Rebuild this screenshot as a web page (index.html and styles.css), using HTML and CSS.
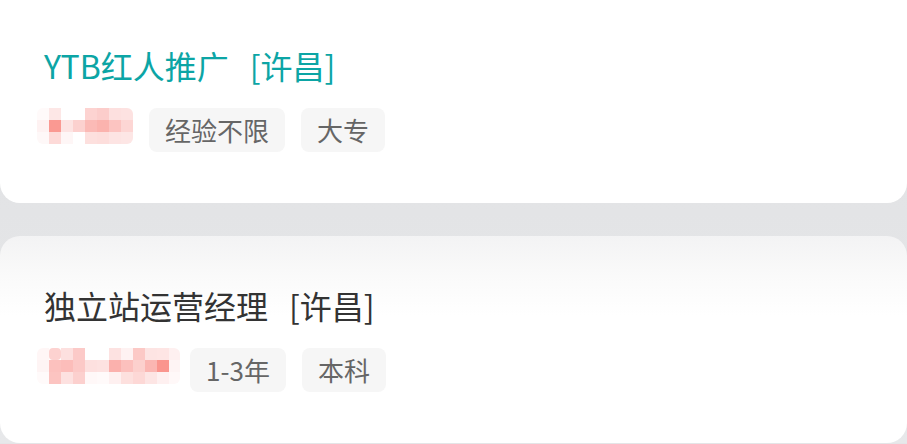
FILE: index.html
```html
<!DOCTYPE html>
<html lang="zh-CN">
<head>
  <meta charset="UTF-8">
  <meta name="viewport" content="width=device-width, initial-scale=1.0">
  <title>职位列表</title>
  <link rel="stylesheet" href="styles.css">
</head>
<body>
  <div class="job-list">
    <div class="job-card">
      <div class="job-title visited">YTB红人推广<span class="job-area">[许昌]</span></div>
      <div class="job-info">
        <!-- 薪资打码 -->
        <svg class="mosaic" width="96" height="36" viewBox="0 0 96 36">
          <rect x="0" y="0" width="12" height="12" fill="#fffafa"/>
          <rect x="12" y="0" width="12" height="12" fill="#fde7e6"/>
          <rect x="24" y="0" width="12" height="12" fill="#ffffff"/>
          <rect x="36" y="0" width="12" height="12" fill="#ffffff"/>
          <rect x="48" y="0" width="12" height="12" fill="#fdd3d1"/>
          <rect x="60" y="0" width="12" height="12" fill="#fccdcb"/>
          <rect x="72" y="0" width="12" height="12" fill="#fde0df"/>
          <rect x="84" y="0" width="12" height="12" fill="#fde2e1"/>
          <rect x="0" y="12" width="12" height="12" fill="#fef2f2"/>
          <rect x="12" y="12" width="12" height="12" fill="#fa9992"/>
          <rect x="24" y="12" width="12" height="12" fill="#fde4e3"/>
          <rect x="36" y="12" width="12" height="12" fill="#fcd1cf"/>
          <rect x="48" y="12" width="12" height="12" fill="#fbbab6"/>
          <rect x="60" y="12" width="12" height="12" fill="#fbb3ae"/>
          <rect x="72" y="12" width="12" height="12" fill="#fcc4c1"/>
          <rect x="84" y="12" width="12" height="12" fill="#fdd6d4"/>
          <rect x="0" y="24" width="12" height="12" fill="#fef8f8"/>
          <rect x="12" y="24" width="12" height="12" fill="#fddad8"/>
          <rect x="24" y="24" width="12" height="12" fill="#fef6f6"/>
          <rect x="36" y="24" width="12" height="12" fill="#ffffff"/>
          <rect x="48" y="24" width="12" height="12" fill="#fde0de"/>
          <rect x="60" y="24" width="12" height="12" fill="#fddedc"/>
          <rect x="72" y="24" width="12" height="12" fill="#fde4e3"/>
          <rect x="84" y="24" width="12" height="12" fill="#fde6e5"/>
        </svg>
        <span class="tag">经验不限</span>
        <span class="tag">大专</span>
      </div>
    </div>

    <div class="job-card hover">
      <div class="job-title">独立站运营经理<span class="job-area">[许昌]</span></div>
      <div class="job-info">
        <svg class="mosaic wide" width="143" height="36" viewBox="0 0 143 36">
          <rect x="0" y="0" width="12" height="12" fill="#fff6f6"/>
          <rect x="12" y="0" width="12" height="12" fill="#fdd2d0" rx="4"/>
          <rect x="24" y="0" width="12" height="12" fill="#fde0df"/>
          <rect x="36" y="0" width="12" height="12" fill="#fccac8"/>
          <rect x="48" y="0" width="12" height="12" fill="#ffffff"/>
          <rect x="60" y="0" width="12" height="12" fill="#ffffff"/>
          <rect x="72" y="0" width="12" height="12" fill="#fde2e1"/>
          <rect x="84" y="0" width="12" height="12" fill="#fef2f2"/>
          <rect x="96" y="0" width="12" height="12" fill="#fcc9c6"/>
          <rect x="108" y="0" width="12" height="12" fill="#fde4e3"/>
          <rect x="120" y="0" width="12" height="12" fill="#fee5e4"/>
          <rect x="132" y="0" width="11" height="12" fill="#fef0f0"/>
          <rect x="0" y="12" width="12" height="12" fill="#fef4f4"/>
          <rect x="12" y="12" width="12" height="12" fill="#fcc1be"/>
          <rect x="24" y="12" width="12" height="12" fill="#fcbdba"/>
          <rect x="36" y="12" width="12" height="12" fill="#fcc9c7"/>
          <rect x="48" y="12" width="12" height="12" fill="#fde0df"/>
          <rect x="60" y="12" width="12" height="12" fill="#fde2e1"/>
          <rect x="72" y="12" width="12" height="12" fill="#fbb1ad"/>
          <rect x="84" y="12" width="12" height="12" fill="#fcc0bd"/>
          <rect x="96" y="12" width="12" height="12" fill="#fcd0cd"/>
          <rect x="108" y="12" width="12" height="12" fill="#fbb6b2"/>
          <rect x="120" y="12" width="12" height="12" fill="#fa958e"/>
          <rect x="132" y="12" width="11" height="12" fill="#fef4f4"/>
          <rect x="0" y="24" width="12" height="12" fill="#fffafa"/>
          <rect x="12" y="24" width="12" height="12" fill="#fcc4c1"/>
          <rect x="24" y="24" width="12" height="12" fill="#fde1e0"/>
          <rect x="36" y="24" width="12" height="12" fill="#fcd0ce"/>
          <rect x="48" y="24" width="12" height="12" fill="#fff8f8"/>
          <rect x="60" y="24" width="12" height="12" fill="#fffafa"/>
          <rect x="72" y="24" width="12" height="12" fill="#fef0f0"/>
          <rect x="84" y="24" width="12" height="12" fill="#fde0de"/>
          <rect x="96" y="24" width="12" height="12" fill="#fdd8d6"/>
          <rect x="108" y="24" width="12" height="12" fill="#fde5e4"/>
          <rect x="120" y="24" width="12" height="12" fill="#fef0f0"/>
          <rect x="132" y="24" width="11" height="12" fill="#fff8f8"/>
        </svg>
        <span class="tag">1-3年</span>
        <span class="tag">本科</span>
      </div>
    </div>
  </div>
</body>
</html>
```

FILE: styles.css
```css
body {
  margin: 0;
  font-family: "Noto Sans CJK SC", "Liberation Sans", sans-serif;
  background: #e4e5e7;
  overflow: hidden;
}
/* 列表已向下滚动了一点 */
.job-list {
  display: flex;
  flex-direction: column;
  gap: 33px;
  margin-top: -20px;
  background: linear-gradient(180deg, #dfe0e2, #e7e8ea);
}
.job-card {
  background: #fff;
  border-radius: 20px;
  padding: 47px 44px 51px;
}
.job-card:first-child {
  padding-top: 63px;
}
.job-card.hover {
  background: linear-gradient(180deg, #f3f3f4 0, #fafafa 40px, #fff 80px);
}
.job-title {
  font-size: 32px;
  line-height: 44px;
  color: #333;
  white-space: nowrap;
}
.job-title.visited {
  color: #0ca5a5;
}
.job-area {
  margin-left: 21px;
}
.job-info {
  display: flex;
  align-items: flex-start;
  gap: 16px;
  margin-top: 21px;
}
.mosaic {
  display: block;
  margin-left: -7px;
  border-radius: 6px;
}
.mosaic.wide {
  margin-right: -6px;
}
.tag {
  height: 44px;
  line-height: 44px;
  padding: 0 16px;
  font-size: 26px;
  color: #666;
  background: #f6f6f6;
  border-radius: 8px;
}
```
